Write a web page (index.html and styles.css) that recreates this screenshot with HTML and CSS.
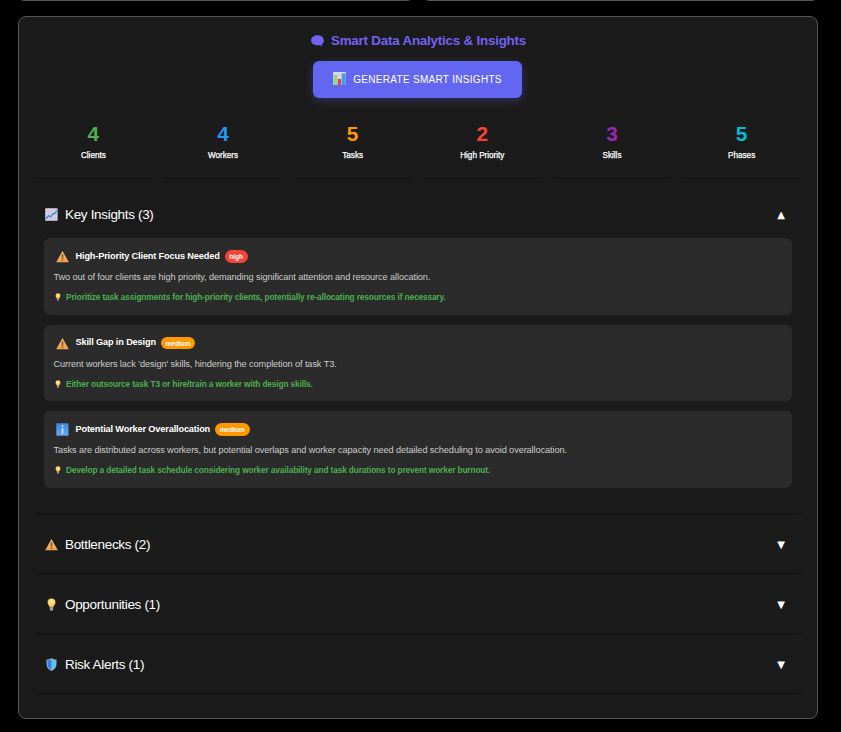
FILE: index.html
```
<!DOCTYPE html>
<html lang="en">
<head>
<meta charset="utf-8">
<title>Smart Data Analytics &amp; Insights</title>
<link rel="stylesheet" href="styles.css">
</head>
<body>
<svg class="defs" aria-hidden="true">
  <defs>
    <linearGradient id="amber" x1="0" y1="0" x2="0" y2="1"><stop offset="0" stop-color="#f2c06b"/><stop offset="1" stop-color="#f5a04e"/></linearGradient>
    <linearGradient id="blue" x1="0" y1="0" x2="0" y2="1"><stop offset="0" stop-color="#3f86e0"/><stop offset="1" stop-color="#63a8f5"/></linearGradient>
    <radialGradient id="glow" cx=".5" cy=".4" r=".6"><stop offset="0" stop-color="#fff0a0"/><stop offset="1" stop-color="#f5b93c"/></radialGradient>
    <symbol id="warning" viewBox="0 0 13 12"><path d="M6.5.5 12.8 11.7H.2Z" fill="url(#amber)"/><path d="M5.7 3.8h1.6v4.4H5.7zM5.7 9h1.6v1.5H5.7z" fill="#7d5a3a"/></symbol>
    <symbol id="info" viewBox="0 0 13 13"><rect x=".3" y=".2" width="12.2" height="12.6" rx=".8" fill="url(#blue)"/><path d="M5.7 2.3h1.6v1.6H5.7zM5.7 5h1.6v5.8H5.7z" fill="#dbe9fb"/></symbol>
    <symbol id="bulb" viewBox="0 0 13 13"><path d="M6.5.4a4 4 0 0 0-4 4c0 2 1.8 3 2.1 4.8h3.8c.3-1.8 2.1-2.8 2.1-4.8a4 4 0 0 0-4-4Z" fill="url(#glow)"/><path d="M4.8 9.2h3.4v2.3l-.9 1.2H5.7l-.9-1.2z" fill="#a59ab0"/></symbol>
    <symbol id="shield" viewBox="0 0 13 13"><path d="M6.5 0C5 1 3.300 1.500 1.500 1.800v4.500c0 3 2 5.200 5 6.700 3-1.500 5-3.700 5-6.700V1.800C9.700 1.500 8 1 6.500 0Z" fill="#9cb6d8"/><path d="M6.5 1c-1.3.8-2.6 1.200-4 1.500v3.800c0 2.400 1.500 4.200 4 5.600Z" fill="#2f83e0"/><path d="M6.500 1c1.300.8 2.600 1.200 4 1.500v3.800c0 2.400-1.500 4.200-4 5.600Z" fill="#57c0fa"/></symbol>
    <symbol id="trend" viewBox="0 0 13 13"><rect x=".2" y=".2" width="12.400" height="12.600" rx=".6" fill="#d9d0e3"/><path d="M3.300 0v13M6.400 0v13M9.500 0v13M0 3.300h13M0 6.500h13M0 9.700h13" stroke="#c2b8d0" stroke-width=".5"/><path d="M.6 10.800 3.800 7.800 5.600 8.800 8.300 5.600 9.600 5.600 12.200 2.300" fill="none" stroke="#2c86d8" stroke-width="1.200"/></symbol>
    <symbol id="bars" viewBox="0 0 13 13"><rect width="13" height="13" rx=".6" fill="#ded8e6"/><path d="M0 3.300h13M0 6.500h13M4.300 0v13M8.700 0v13" stroke="#c5bdd0" stroke-width=".4"/><rect x=".4" y="3" width="3.900" height="10" fill="#8fda78"/><rect x="4.900" y="7" width="3.300" height="6" fill="#d93f78"/><rect x="8.800" y="1.400" width="3.900" height="11.600" fill="#3f9fe0"/></symbol>
    <symbol id="speech" viewBox="0 0 13 12"><path d="M6.700.2C3 .2.1 2.300.1 5.300c0 2.800 2.300 4.700 5.400 5 1.300.1 2.600 0 3.600-.2.500.7 1 1.300 1.800 1.300-.2-.6-.1-1.200 0-1.900 1.200-.9 2-2.200 2-3.900C12.900 2.400 10.300.2 6.700.2Z" fill="#7461f0"/></symbol>
  </defs>
</svg>
<div class="upper-row"><div class="upper-card"></div><div class="upper-card"></div></div>
<main class="panel">
  <h2 class="panel-title"><svg class="speech"><use href="#speech"/></svg><span>Smart Data Analytics &amp; Insights</span></h2>
  <button class="generate"><svg class="icon"><use href="#bars"/></svg><span>GENERATE SMART INSIGHTS</span></button>
  <div class="stats">
    <div class="stat"><strong class="green">4</strong><span>Clients</span></div>
    <div class="stat"><strong class="azure">4</strong><span>Workers</span></div>
    <div class="stat"><strong class="orange">5</strong><span>Tasks</span></div>
    <div class="stat"><strong class="red">2</strong><span>High Priority</span></div>
    <div class="stat"><strong class="purple">3</strong><span>Skills</span></div>
    <div class="stat"><strong class="cyan">5</strong><span>Phases</span></div>
  </div>
  <section class="section open">
    <h3 class="section-head"><svg class="icon"><use href="#trend"/></svg><span>Key Insights (3)</span><i class="arrow">▲</i></h3>
    <div class="insights">
      <article class="insight">
        <h4><svg class="icon"><use href="#warning"/></svg><span>High-Priority Client Focus Needed</span><em class="badge high">high</em></h4>
        <p class="desc">Two out of four clients are high priority, demanding significant attention and resource allocation.</p>
        <p class="tip"><svg class="mini"><use href="#bulb"/></svg><span>Prioritize task assignments for high-priority clients, potentially re-allocating resources if necessary.</span></p>
      </article>
      <article class="insight">
        <h4><svg class="icon"><use href="#warning"/></svg><span>Skill Gap in Design</span><em class="badge">medium</em></h4>
        <p class="desc">Current workers lack 'design' skills, hindering the completion of task T3.</p>
        <p class="tip"><svg class="mini"><use href="#bulb"/></svg><span>Either outsource task T3 or hire/train a worker with design skills.</span></p>
      </article>
      <article class="insight">
        <h4><svg class="icon"><use href="#info"/></svg><span>Potential Worker Overallocation</span><em class="badge">medium</em></h4>
        <p class="desc">Tasks are distributed across workers, but potential overlaps and worker capacity need detailed scheduling to avoid overallocation.</p>
        <p class="tip"><svg class="mini"><use href="#bulb"/></svg><span>Develop a detailed task schedule considering worker availability and task durations to prevent worker burnout.</span></p>
      </article>
    </div>
  </section>
  <section class="section"><h3 class="section-head"><svg class="icon"><use href="#warning"/></svg><span>Bottlenecks (2)</span><i class="arrow">▼</i></h3></section>
  <section class="section"><h3 class="section-head"><svg class="icon"><use href="#bulb"/></svg><span>Opportunities (1)</span><i class="arrow">▼</i></h3></section>
  <section class="section"><h3 class="section-head"><svg class="icon"><use href="#shield"/></svg><span>Risk Alerts (1)</span><i class="arrow">▼</i></h3></section>
</main>
</body>
</html>
```
FILE: styles.css
```
* { box-sizing: border-box; }
body { margin: 0; height: 732px; overflow: hidden; background: #000; color: #fff; font-family: "Liberation Sans", Arial, sans-serif; }
h2, h3, h4, p { margin: 0; white-space: nowrap; }
.defs { position: absolute; width: 0; height: 0; }
.upper-row { display: flex; align-items: flex-end; gap: 10px; width: 800px; height: 1px; margin-left: 18px; overflow: hidden; }
.upper-card { flex: 1; height: 20px; border: 1px solid #555; border-radius: 6px; background: #1b1b1b; }
.panel { display: flex; flex-direction: column; width: 800px; height: 703px; margin: 15px 0 0 18px; padding: 15px 15.5px 15px 14.5px; border: 1px solid #555; border-radius: 8px; background: #1b1b1b; }
.panel-title { display: flex; justify-content: center; align-items: center; gap: 7px; height: 17px; padding-left: 2px; font-size: 13.4px; letter-spacing: -.22px; font-weight: 700; color: #7461f0; }
.speech { width: 13px; height: 12px; }
.generate { display: flex; align-items: center; justify-content: center; align-self: center; gap: 7px; width: 209px; height: 37px; margin-top: 12px; padding: 0; border: 0; border-radius: 6px; background: #6366f1; color: #fff; font: 10px "Liberation Sans", Arial, sans-serif; letter-spacing: .3px; box-shadow: 0 3px 10px rgba(99, 102, 241, .3); }
.generate .icon { margin-top: -2px; }
.icon { flex: none; width: 13px; height: 13px; }
.stats { display: grid; grid-template-columns: repeat(6, 1fr); gap: 10px; height: 66px; margin-top: 14px; }
.stat { display: flex; flex-direction: column; align-items: center; padding-top: 10px; border-radius: 4px; box-shadow: 0 1px 1px rgba(0, 0, 0, .3); background: #1b1b1b; }
.stat strong { font-size: 20.8px; line-height: 24px; }
.stat span { margin-top: 5px; font-size: 8.15px; line-height: 10px; -webkit-text-stroke: .25px #fff; }
.green { color: #4caf50; }
.azure { color: #2196f3; }
.orange { color: #ff9800; }
.red { color: #f44336; }
.purple { color: #9c27b0; }
.cyan { color: #00bcd4; }
.section { flex: none; height: 51px; margin-top: 9px; padding: 0 10px; border-radius: 4px; background: #1b1b1b; box-shadow: 0 1px 1px rgba(0, 0, 0, .3); }
.section.open { height: 321px; margin-top: 14px; }
.section-head { display: flex; align-items: center; height: 46px; padding-left: 1.5px; font-size: 13.5px; letter-spacing: -.33px; font-weight: 400; }
.section-head span { padding-bottom: 2px; }
.section-head .icon { margin: -1px 7px 0 0; }
.arrow { margin: -2px 6.5px 0 auto; font: normal 10px "DejaVu Sans", sans-serif; letter-spacing: 0; }
.insights { display: flex; flex-direction: column; gap: 10px; }
.insight { height: 76.6px; padding: 10px; border-radius: 6px; background: #2b2b2b; }
.insight h4 { display: flex; align-items: center; height: 17px; padding-left: 2px; font-size: 9.2px; letter-spacing: -.15px; }
.insight h4 span { padding-bottom: 2px; }
.insight h4 .icon { margin-right: 7px; }
.badge { display: flex; align-items: center; height: 12.5px; margin-left: 5px; padding: 0 4.6px; border-radius: 7px; background: #ff9800; font: normal 700 6.6px "Liberation Sans", Arial, sans-serif; letter-spacing: 0; }
.badge.high { background: #f44336; }
.desc { margin-top: 6px; font-size: 9.2px; letter-spacing: -.097px; line-height: 12px; color: #ccc; }
.tip { display: flex; align-items: center; height: 12px; margin-top: 8px; padding-left: .5px; font-size: 8.3px; letter-spacing: -.122px; font-weight: 700; color: #4caf50; }
.mini { width: 8px; height: 8px; margin-right: 4px; }
```
